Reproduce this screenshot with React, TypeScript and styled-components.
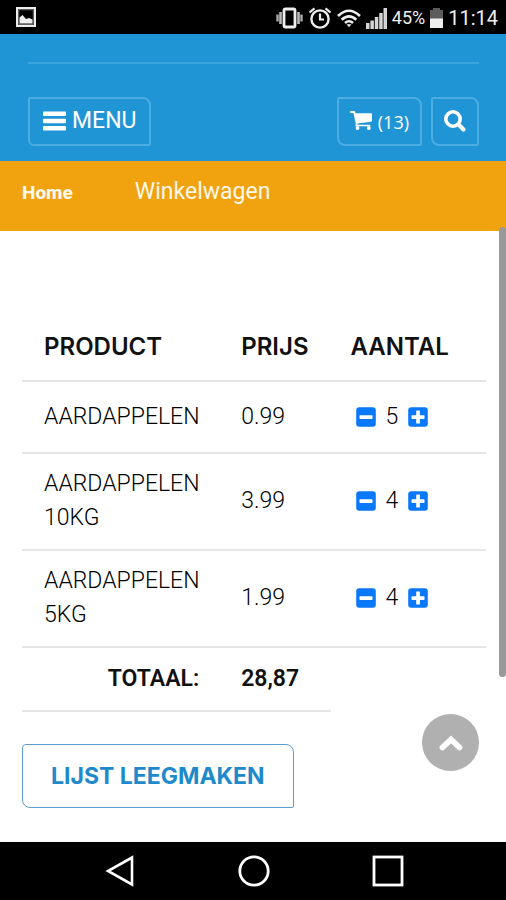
import React, { useState } from "react";
import styled, { createGlobalStyle } from "styled-components";

const GlobalStyle = createGlobalStyle`
  *, *::before, *::after { box-sizing: border-box; }
  html, body { margin: 0; padding: 0; background: #fff; }
  body { font-family: Roboto, "Liberation Sans", sans-serif; color: #111; }
  button { font: inherit; cursor: pointer; }
`;

const Screen = styled.div`
  min-height: 100vh;
  display: flex;
  flex-direction: column;
  position: relative;
`;

const StatusBar = styled.div`
  height: 34px;
  padding: 0 8px 0 16px;
  background: #000;
  color: #eee;
  display: flex;
  align-items: center;
  justify-content: space-between;
`;

const StatusGroup = styled.div`
  display: flex;
  align-items: center;
  gap: 5px;
  padding-top: 2px;
`;

const StatusText = styled.span<{ $large?: boolean }>`
  font-size: ${(p) => (p.$large ? 20 : 18)}px;
  line-height: 24px;
`;

const Header = styled.header`
  background: #1f95d5;
  padding: 28px 27px 15px 28px;
`;

const Divider = styled.hr`
  margin: 0 0 33px;
  border: 0;
  height: 2px;
  background: #3ba4de;
`;

const Toolbar = styled.div`
  display: flex;
  gap: 9px;
`;

const ToolButton = styled.button<{ $push?: boolean; $small?: boolean }>`
  height: 49px;
  padding: 0 ${(p) => (p.$small ? 11 : 13)}px 2px;
  margin-right: ${(p) => (p.$push ? "auto" : "0")};
  border: 2px solid #4bade0;
  border-radius: ${(p) => (p.$small ? "2px 8px 2px 8px" : "2px 8px 2px 6px")};
  background: transparent;
  color: #fff;
  display: flex;
  align-items: center;
  gap: 6px;
  font-size: 23px;
  line-height: 28px;
`;

const CartCount = styled.span`
  font-family: "Open Sans", "Noto Sans", sans-serif;
  font-size: 18px;
  padding-top: 2px;
`;

const Breadcrumb = styled.nav`
  height: 70px;
  padding: 17px 22px;
  background: #f1a20f;
  color: #fff8ea;
  display: flex;
  align-items: flex-start;
  gap: 62px;
  font-size: 23px;
  line-height: 28px;
`;

const HomeLink = styled.a`
  color: inherit;
  text-decoration: none;
  font-size: 19px;
  line-height: 30px;
  font-weight: 800;
`;

const Main = styled.main`
  flex: 1;
  position: relative;
  padding: 83px 20px 34px 22px;
`;

const CartTable = styled.table`
  width: 100%;
  table-layout: fixed;
  border-collapse: collapse;
  margin-bottom: 32px;
`;

const ProductCol = styled.col`
  width: 42.5%;
`;

const PriceCol = styled.col`
  width: 24%;
`;

const HeadCell = styled.th<{ $wide?: boolean }>`
  height: 67px;
  padding: 0 ${(p) => (p.$wide ? 20 : 22)}px;
  border-bottom: 2px solid #e4e4e4;
  font-family: Inter, "Liberation Sans", sans-serif;
  font-weight: 600;
  font-size: 24px;
  line-height: 34px;
  text-align: left;
  white-space: nowrap;
`;

const Cell = styled.td`
  padding: 13px 22px 14px;
  border-bottom: 2px solid #e6e6e6;
  color: #000;
  font-weight: 300;
  font-size: 23px;
  line-height: 34px;
  vertical-align: middle;

  tr:first-child > & {
    padding: 18px 22px 18px;
  }
`;

const TotalCell = styled.td<{ $end?: boolean }>`
  height: 64px;
  padding: 0 20px 0 22px;
  border-bottom: 2px solid #e6e6e6;
  font-weight: 600;
  font-size: 23px;
  line-height: 34px;
  text-align: ${(p) => (p.$end ? "right" : "left")};
`;

const Quantity = styled.div`
  display: flex;
  align-items: center;
  gap: 10px;
  padding-left: 3px;
`;

const StepButton = styled.button`
  border: 0;
  padding: 0;
  background: none;
  display: flex;
`;

const ClearButton = styled.button`
  display: block;
  height: 64px;
  padding: 0 28px;
  border: 1px solid #5b9fd2;
  border-radius: 4px 8px 2px 8px;
  background: #fff;
  color: #1e8acb;
  font-family: Inter, "Liberation Sans", sans-serif;
  font-weight: 700;
  font-size: 23px;
  line-height: 28px;
  white-space: nowrap;
`;

const TopButton = styled.button`
  position: absolute;
  right: 27px;
  bottom: 71px;
  width: 57px;
  height: 57px;
  padding: 0;
  border: 0;
  border-radius: 50%;
  background: #b0b0b0;
  display: flex;
  align-items: center;
  justify-content: center;
`;

const ScrollThumb = styled.div`
  position: absolute;
  right: 0;
  top: 227px;
  width: 7px;
  height: 450px;
  border-radius: 4px;
  background: #999;
`;

const NavBar = styled.nav`
  height: 58px;
  padding: 0 102px 0 103px;
  background: #000;
  display: flex;
  align-items: center;
  justify-content: space-between;
`;

const NavButton = styled.button`
  border: 0;
  padding: 0;
  background: none;
  display: flex;
`;

const GalleryIcon = () => (
  <svg width="20" height="20" viewBox="0 0 20 20" aria-hidden="true">
    <rect x="1" y="1" width="18" height="18" fill="#000" stroke="#eee" strokeWidth="2" />
    <rect x="2.7" y="2.7" width="14.6" height="14.6" fill="none" stroke="#777" />
    <path d="M3.5 10.5 6.5 8 10 12l3-1 3.5 1.5V16.500H3.500Z" fill="#eee" />
  </svg>
);

const VibrateIcon = () => (
  <svg width="27" height="22" viewBox="0 0 27 22" aria-hidden="true">
    <rect x="8" y="2" width="11" height="18" rx="1.500" fill="none" stroke="#eee" strokeWidth="2.800" />
    <path d="M4.500 5v12M22.500 5v12" stroke="#bbb" strokeWidth="2.600" />
    <path d="M1.500 7.500v7M25.500 7.500v7" stroke="#aaa" strokeWidth="2.400" />
  </svg>
);

const AlarmIcon = () => (
  <svg width="24" height="22" viewBox="0 0 24 22" fill="none" stroke="#eee" aria-hidden="true">
    <circle cx="12" cy="12" r="8.600" strokeWidth="2.400" />
    <path d="M12 6.500V12.500H16" strokeWidth="2.200" />
    <path d="M1.500 5.500 6.500 1.300M22.500 5.500 17.500 1.300" strokeWidth="2.200" />
  </svg>
);

const WifiIcon = () => (
  <svg width="24" height="19" viewBox="0 0 24 19" fill="none" stroke="#eee" strokeWidth="2.600" aria-hidden="true">
    <path d="M1 7Q12-3.500 23 7" />
    <path d="M4.700 10.700Q12 4 19.300 10.700" />
    <path d="M8 14Q12 10.500 16 14" />
    <path d="M9.500 15.200h5L12 18.300Z" fill="#eee" stroke="none" />
  </svg>
);

const SignalIcon = () => (
  <svg width="21" height="21" viewBox="0 0 21 21" fill="#d4d4d4" aria-hidden="true">
    <path d="M0 15h3.500v6H0zM4.400 12.500h3.500v8.500h-3.500zM8.800 9h3.500V21H8.800zM13.200 5h3.500v16h-3.500zM17.500 0h3.500v21h-3.500z" />
  </svg>
);

const BatteryIcon = () => (
  <svg width="13" height="20" viewBox="0 0 13 20" aria-hidden="true">
    <path d="M3 0h7v2h3v9H0V2h3Z" fill="#5c5c5c" />
    <path d="M0 10.500h13V20H0Z" fill="#eee" />
  </svg>
);

const MenuIcon = () => (
  <svg width="23" height="20" viewBox="0 0 23 20" fill="#fff" aria-hidden="true">
    <rect width="23" height="4.400" rx="1" y="0.500" />
    <rect width="23" height="4.400" rx="1" y="7.800" />
    <rect width="23" height="4.400" rx="1" y="15.100" />
  </svg>
);

const CartIcon = () => (
  <svg width="22" height="19" viewBox="0 0 22 19" fill="#fff" aria-hidden="true">
    <path d="M0.800 0H4.200Q5 0 5.200 0.900L5.500 2.200H21Q22 2.200 22 3.200V9.600Q22 10.500 21.100 10.700L7.300 12.500 7.500 13.700H19.600Q20.500 13.700 20.500 14.500T19.600 15.300H6.300Q5.400 15.300 5.400 14.500L5.800 13.100 3.500 1.900H0.800Q0 1.900 0 1T0.800 0Z" />
    <circle cx="7.500" cy="17" r="1.900" />
    <circle cx="18.800" cy="17" r="1.900" />
  </svg>
);

const SearchIcon = () => (
  <svg width="22" height="22" viewBox="0 0 22 22" fill="none" stroke="#fff" aria-hidden="true">
    <circle cx="9" cy="9" r="7.200" strokeWidth="3.600" />
    <path d="m14.500 14.500 5 5" strokeWidth="4" strokeLinecap="round" />
  </svg>
);

const StepIcon = ({ plus }: { plus?: boolean }) => (
  <svg width="20" height="20" viewBox="0 0 20 20" aria-hidden="true">
    <rect x="0.200" y="0.200" width="19.600" height="19.600" rx="3" fill="#0a78fa" />
    <rect x="3.500" y="8.200" width="13" height="3.700" rx="0.600" fill="#fff" />
    {plus && <rect x="8.200" y="3.500" width="3.700" height="13" rx="0.600" fill="#fff" />}
  </svg>
);

const ChevronIcon = () => (
  <svg width="24" height="18" viewBox="0 0 24 18" fill="none" aria-hidden="true">
    <path d="M3.500 13.500 12 5.500l8.500 8" stroke="#fff" strokeWidth="5.800" strokeLinecap="round" strokeLinejoin="miter" />
  </svg>
);

const BackIcon = () => (
  <svg width="32" height="32" viewBox="0 0 32 32" fill="none" aria-hidden="true">
    <path d="M29 2.500v27L5 16Z" stroke="#fff" strokeWidth="2.600" />
  </svg>
);

const HomeIcon = () => (
  <svg width="32" height="32" viewBox="0 0 32 32" fill="none" aria-hidden="true">
    <circle cx="16" cy="16" r="14.200" stroke="#fff" strokeWidth="2.800" />
  </svg>
);

const RecentIcon = () => (
  <svg width="32" height="32" viewBox="0 0 32 32" fill="none" aria-hidden="true">
    <rect x="2" y="2" width="28" height="28" stroke="#fff" strokeWidth="2.800" />
  </svg>
);

const items = [
  { name: "AARDAPPELEN", price: "0.99", amount: 5 },
  { name: "AARDAPPELEN 10KG", price: "3.99", amount: 4 },
  { name: "AARDAPPELEN 5KG", price: "1.99", amount: 4 },
];

export default function App() {
  const [amounts, setAmounts] = useState(items.map((i) => i.amount));
  const step = (index: number, by: number) =>
    setAmounts((all) => all.map((n, i) => (i === index ? Math.max(0, n + by) : n)));

  return (
    <Screen>
      <GlobalStyle />
      <StatusBar>
        <GalleryIcon />
        <StatusGroup>
          <VibrateIcon />
          <AlarmIcon />
          <WifiIcon />
          <SignalIcon />
          <StatusText>45%</StatusText>
          <BatteryIcon />
          <StatusText $large>11:14</StatusText>
        </StatusGroup>
      </StatusBar>

      <Header>
        <Divider />
        <Toolbar>
          <ToolButton $push>
            <MenuIcon />
            MENU
          </ToolButton>
          <ToolButton $small aria-label="Winkelwagen (13)">
            <CartIcon />
            <CartCount>(13)</CartCount>
          </ToolButton>
          <ToolButton $small aria-label="Zoeken">
            <SearchIcon />
          </ToolButton>
        </Toolbar>
      </Header>

      <Breadcrumb aria-label="Kruimelpad">
        <HomeLink href="#home">Home</HomeLink>
        <span>Winkelwagen</span>
      </Breadcrumb>

      <Main>
        <CartTable>
          <colgroup>
            <ProductCol />
            <PriceCol />
            <col />
          </colgroup>
          <thead>
            <tr>
              <HeadCell scope="col">PRODUCT</HeadCell>
              <HeadCell scope="col">PRIJS</HeadCell>
              <HeadCell scope="col" $wide>AANTAL</HeadCell>
            </tr>
          </thead>
          <tbody>
            {items.map((item, i) => (
              <tr key={item.name}>
                <Cell>{item.name}</Cell>
                <Cell>{item.price}</Cell>
                <Cell>
                  <Quantity>
                    <StepButton aria-label={`Minder ${item.name}`} onClick={() => step(i, -1)}>
                      <StepIcon />
                    </StepButton>
                    {amounts[i]}
                    <StepButton aria-label={`Meer ${item.name}`} onClick={() => step(i, 1)}>
                      <StepIcon plus />
                    </StepButton>
                  </Quantity>
                </Cell>
              </tr>
            ))}
          </tbody>
          <tfoot>
            <tr>
              <TotalCell $end>TOTAAL:</TotalCell>
              <TotalCell>28,87</TotalCell>
            </tr>
          </tfoot>
        </CartTable>
        <ClearButton onClick={() => setAmounts(items.map(() => 0))}>LIJST LEEGMAKEN</ClearButton>
        <TopButton aria-label="Naar boven">
          <ChevronIcon />
        </TopButton>
      </Main>

      <NavBar>
        <NavButton aria-label="Terug"><BackIcon /></NavButton>
        <NavButton aria-label="Startscherm"><HomeIcon /></NavButton>
        <NavButton aria-label="Recente apps"><RecentIcon /></NavButton>
      </NavBar>
      <ScrollThumb />
    </Screen>
  );
}
